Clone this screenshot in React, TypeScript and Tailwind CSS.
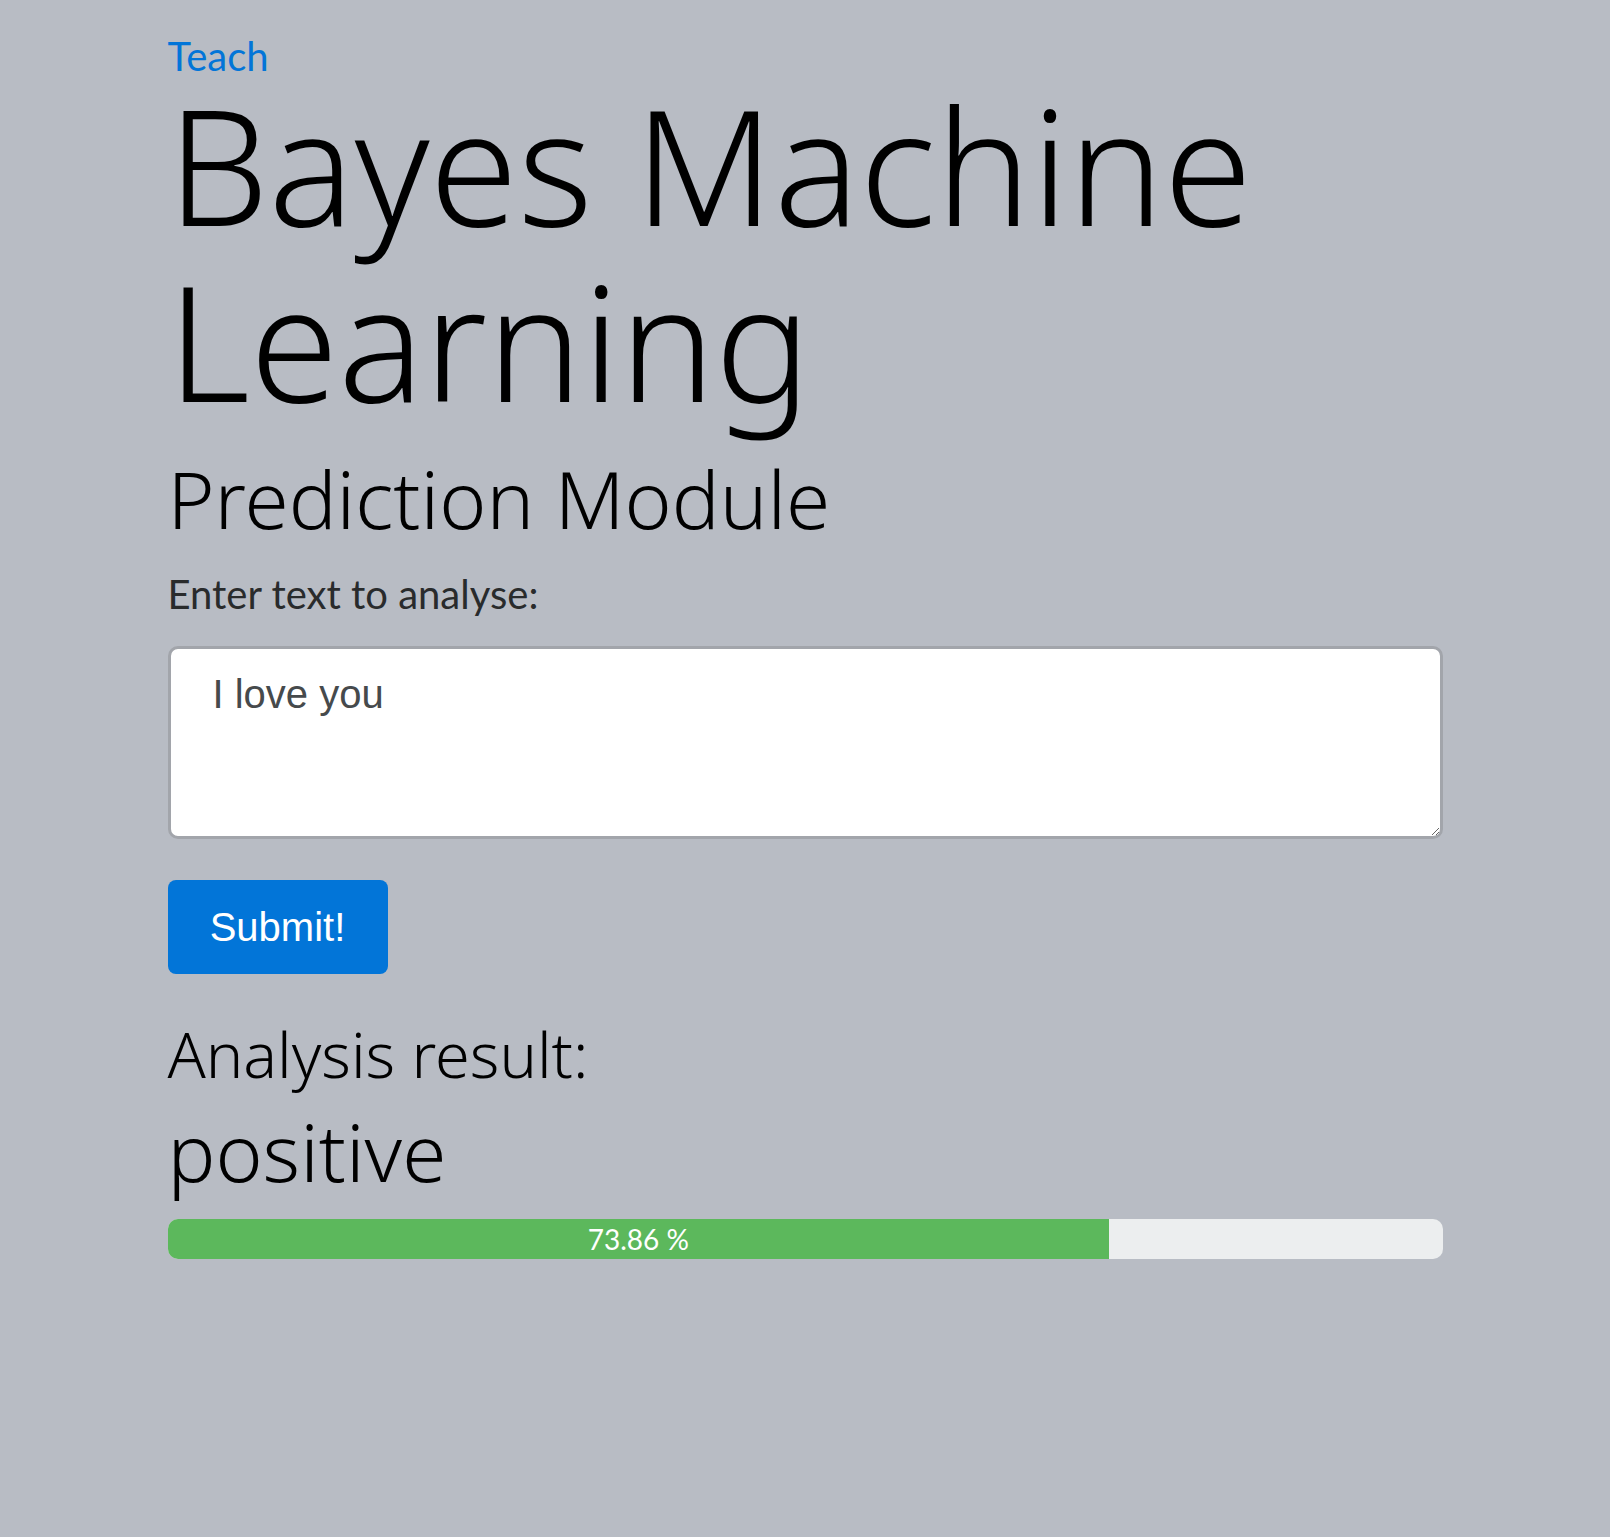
import React from "react";

export default function App() {
  const pct = 73.86;
  return (
    <div className="min-h-screen bg-[#b8bcc4]">
      <div className="mx-auto flex w-[1275px] flex-col items-start pt-[36px]">
        <a
          href="#"
          className="block font-['Lato',sans-serif] text-[40px] leading-[40px] text-[#0275d8]"
        >
          Teach
        </a>
        <h1 className="font-['Noto_Sans',sans-serif] text-[160px] font-light leading-[1.1] text-black">
          Bayes Machine Learning
        </h1>
        <h2 className="mt-[26px] font-['Noto_Sans',sans-serif] text-[80px] font-light leading-[1.1] text-black">
          Prediction Module
        </h2>
        <label className="mt-[22px] block font-['Lato',sans-serif] text-[40px] leading-[60px] text-[#292b2c]">
          Enter text to analyse:
        </label>
        <textarea
          className="mt-[22px] block h-[193px] w-full rounded-[10px] border-[3px] border-[#a2a5ab] bg-white pl-[42px] pr-[30px] pt-[22px] font-['Liberation_Sans',Arial,sans-serif] text-[40px] leading-[46px] text-[#464a4c] outline-none"
          defaultValue="I love you"
        />
        <button className="mt-[41px] h-[94px] w-[220px] rounded-[8px] bg-[#0275d8] font-['Liberation_Sans',Arial,sans-serif] text-[40px] leading-[46px] text-white">
          Submit!
        </button>
        <h4 className="mt-[45px] font-['Noto_Sans',sans-serif] text-[63px] font-light leading-[1.1] text-black">
          Analysis result:
        </h4>
        <h2 className="mt-[19px] font-['Noto_Sans',sans-serif] text-[80px] font-light leading-[1.1] text-black">
          positive
        </h2>
        <div className="mt-[24px] flex h-[40px] w-full overflow-hidden rounded-[10px] bg-[#eceeef]">
          <div
            className="flex h-full items-center justify-center bg-[#5cb85c] font-['Lato',sans-serif] text-[28px] leading-[34px] text-white"
            style={{ width: `${pct}%` }}
          >
            {pct} %
          </div>
        </div>
      </div>
    </div>
  );
}
